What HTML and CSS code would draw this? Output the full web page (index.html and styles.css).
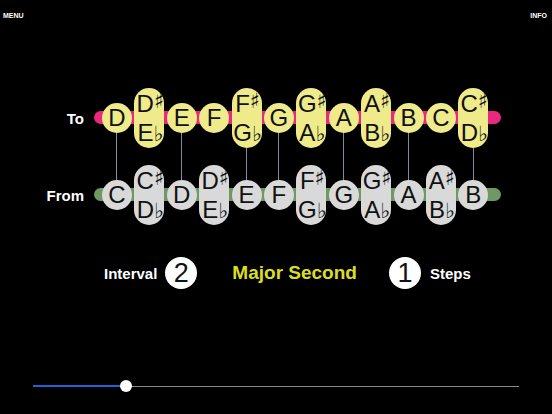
FILE: index.html
```html
<!DOCTYPE html>
<html>
<head>
<meta charset="utf-8">
<link rel="stylesheet" href="styles.css">
</head>
<body>
<div class="header"><span>MENU</span><span>INFO</span></div>

<div class="keyboard">
  <div class="kb-row">
    <div class="label">To</div>
    <div class="track to">
      <div class="cell"><div class="note">D</div></div>
      <div class="cell"><div class="note pill"><span class="ln">D<span class="sh">♯</span></span><span class="ln">E<span class="fl">♭</span></span></div></div>
      <div class="cell"><div class="note">E</div></div>
      <div class="cell"><div class="note">F</div></div>
      <div class="cell"><div class="note pill"><span class="ln">F<span class="sh">♯</span></span><span class="ln">G<span class="fl">♭</span></span></div></div>
      <div class="cell"><div class="note">G</div></div>
      <div class="cell"><div class="note pill"><span class="ln">G<span class="sh">♯</span></span><span class="ln">A<span class="fl">♭</span></span></div></div>
      <div class="cell"><div class="note">A</div></div>
      <div class="cell"><div class="note pill"><span class="ln">A<span class="sh">♯</span></span><span class="ln">B<span class="fl">♭</span></span></div></div>
      <div class="cell"><div class="note">B</div></div>
      <div class="cell"><div class="note">C</div></div>
      <div class="cell"><div class="note pill"><span class="ln">C<span class="sh">♯</span></span><span class="ln">D<span class="fl">♭</span></span></div></div>
    </div>
  </div>

  <div class="kb-row from-row">
    <div class="label">From</div>
    <div class="track from">
      <div class="cell"><span class="line"></span><div class="note">C</div></div>
      <div class="cell"><div class="note pill"><span class="ln">C<span class="sh">♯</span></span><span class="ln">D<span class="fl">♭</span></span></div></div>
      <div class="cell"><span class="line"></span><div class="note">D</div></div>
      <div class="cell"><div class="note pill"><span class="ln">D<span class="sh">♯</span></span><span class="ln">E<span class="fl">♭</span></span></div></div>
      <div class="cell"><span class="line"></span><div class="note">E</div></div>
      <div class="cell"><span class="line"></span><div class="note">F</div></div>
      <div class="cell"><div class="note pill"><span class="ln">F<span class="sh">♯</span></span><span class="ln">G<span class="fl">♭</span></span></div></div>
      <div class="cell"><span class="line"></span><div class="note">G</div></div>
      <div class="cell"><div class="note pill"><span class="ln">G<span class="sh">♯</span></span><span class="ln">A<span class="fl">♭</span></span></div></div>
      <div class="cell"><span class="line"></span><div class="note">A</div></div>
      <div class="cell"><div class="note pill"><span class="ln">A<span class="sh">♯</span></span><span class="ln">B<span class="fl">♭</span></span></div></div>
      <div class="cell"><span class="line"></span><div class="note">B</div></div>
    </div>
  </div>
</div>

<div class="interval">
  <span class="iv-label">Interval</span>
  <span class="badge b-interval">2</span>
  <span class="iv-name">Major Second</span>
  <span class="badge b-steps">1</span>
  <span class="iv-steps">Steps</span>
</div>

<div class="slider">
  <div class="slider-track">
    <div class="slider-fill" style="width: 93px"></div>
    <div class="slider-thumb" style="left: 93px"></div>
  </div>
</div>
</body>
</html>
```

FILE: styles.css
```css
html, body {
  margin: 0;
  padding: 0;
  background: #000;
}
body {
  width: 552px;
  height: 414px;
  overflow: hidden;
  font-family: "Liberation Sans", Arial, sans-serif;
  color: #fff;
}
.header {
  display: flex;
  justify-content: space-between;
  padding: 12px 5px 0 3px;
  font-size: 7px;
  font-weight: bold;
  line-height: 8px;
}
.keyboard {
  margin-top: 68px;
}
.kb-row {
  display: flex;
  align-items: center;
  height: 60px;
}
.from-row {
  margin-top: 17px;
}
.label {
  width: 84px;
  margin-right: 10px;
  text-align: right;
  font-size: 15px;
  font-weight: bold;
}
.track {
  position: relative;
  display: flex;
  height: 60px;
  padding: 0 11.4px 0 6.8px;
}
.track::before {
  content: "";
  position: absolute;
  left: 0;
  right: 0;
  top: 23px;
  height: 13px;
  border-radius: 6.5px;
  z-index: 0;
}
.to::before { background: #e8297c; }
.from::before { background: #6e9965; }
.cell {
  position: relative;
  width: 32.4px;
  height: 60px;
  display: flex;
  align-items: center;
  justify-content: center;
}
.note {
  position: relative;
  z-index: 2;
  width: 30px;
  height: 30px;
  border-radius: 50%;
  display: flex;
  align-items: center;
  justify-content: center;
  font-size: 24px;
  line-height: 1;
  color: #111;
  flex-shrink: 0;
}
.to .note { background: #efeb8b; }
.from .note { background: #d9d9d9; }
.note.pill {
  height: 60px;
  border-radius: 15px;
  flex-direction: column;
}
.ln {
  display: block;
  height: 29px;
  line-height: 29px;
  white-space: nowrap;
  padding-left: 2px;
}
.sh, .fl {
  font-family: "DejaVu Sans", sans-serif;
  font-size: 21px;
  line-height: 1;
}
.sh { vertical-align: 4px; }
.fl { vertical-align: 0; }
.line {
  position: absolute;
  z-index: 1;
  left: calc(50% - 0.5px);
  bottom: 50%;
  width: 1px;
  height: 77px;
  background: #7c8ea0;
}
.interval {
  display: flex;
  align-items: center;
  height: 32px;
  margin-top: 32px;
  font-weight: bold;
  font-size: 15px;
}
.iv-label { margin-left: 104px; }
.badge {
  width: 32px;
  height: 32px;
  border-radius: 50%;
  background: #fff;
  color: #111;
  font-weight: normal;
  font-size: 27px;
  display: flex;
  align-items: center;
  justify-content: center;
}
.b-interval { margin-left: 8px; }
.iv-name {
  margin-left: 35px;
  font-size: 19px;
  color: #dcdf1e;
}
.b-steps { margin-left: 32px; }
.iv-steps { margin-left: 9px; }
.slider {
  margin-top: 91px;
  padding-left: 33px;
  height: 12px;
  display: flex;
  align-items: center;
}
.slider-track {
  position: relative;
  width: 486px;
  height: 1px;
  background: #8a8a8a;
}
.slider-fill {
  position: absolute;
  left: 0;
  top: -0.5px;
  height: 2px;
  background: #1a66d6;
}
.slider-thumb {
  position: absolute;
  top: -5.5px;
  width: 12px;
  height: 12px;
  margin-left: -6px;
  border-radius: 50%;
  background: #fff;
}
```
